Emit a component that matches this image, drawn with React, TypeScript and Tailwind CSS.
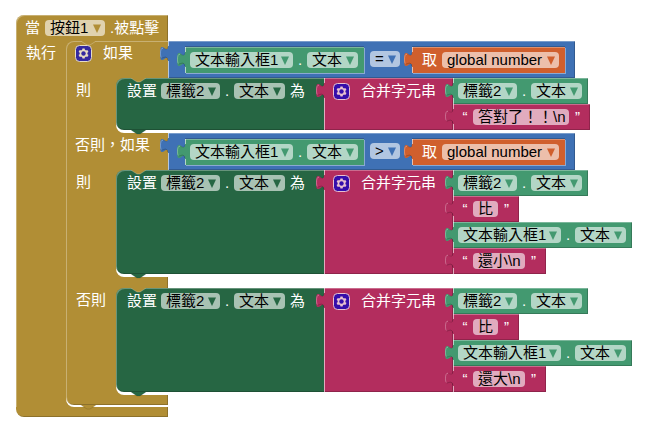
import type { ReactNode } from "react";

const EVENT = "#b18e35";
const EDGE =
  "shadow-[inset_0_1px_0_rgba(255,255,255,0.3),inset_1px_0_0_rgba(255,255,255,0.6),inset_-1px_-1px_0_rgba(0,0,0,0.2)]";
const INPUT_EDGE =
  "shadow-[inset_0_1px_0_rgba(255,255,255,0.3),inset_1px_0_0_rgba(255,255,255,0.6),1px_1px_0_rgba(255,255,255,0.4),0_-1px_0_rgba(0,0,0,0.2)]";

/** Puzzle tab sticking out of the left side of a value block. */
function Tab({ color }: { color: string }) {
  return (
    <svg
      className="absolute -left-2 top-[5px] h-[15px] w-[10px]"
      viewBox="-8 0 10 15"
      aria-hidden="true"
    >
      <path d="M2 0H0C0 10 -8 -8 -8 7.5S0 5 0 15H2Z" fill={color} />
      <path d="M-5 2.2C-6.8 2 -7.5 4 -7.5 7.5C-7.5 9.5 -7.2 10.8 -6.7 11.5" fill="none" stroke="#fff" strokeOpacity="0.3" />
      <path d="M-6.3 12C-4.5 12.2 -1 9 -0.3 14" fill="none" stroke="#000" strokeOpacity="0.2" />
      <path d="M-4.5 2.5C-2.5 3.2 -0.5 4 -0.3 1" fill="none" stroke="#000" strokeOpacity="0.12" />
    </svg>
  );
}

/** Connector wedge used both for the notch on top and the bump below. */
function Notch({ color, place }: { color: string; place: "top" | "bottom" }) {
  return (
    <svg
      className={`absolute left-[15px] z-10 h-[5px] w-[15px] ${place === "top" ? "top-0" : "top-full"}`}
      viewBox="0 0 15 5"
      aria-hidden="true"
    >
      <path d="M0 0L6 4H9L15 0Z" fill={color} />
      <path
        d="M0.5 0.5L6 4H9L14.5 0.5"
        fill="none"
        stroke={place === "top" ? "#fff" : "#000"}
        strokeOpacity={place === "top" ? 0.25 : 0.12}
      />
    </svg>
  );
}

function Gear() {
  return (
    <button type="button" aria-label="設定" className="block size-[17px] shrink-0">
      <svg viewBox="-0.5 -0.5 17 17" className="size-full" aria-hidden="true">
        <g opacity="0.7">
          <rect width="16" height="16" rx="4" fill="#00c" stroke="#fff" />
          <path
            fill="#fff"
            d="m4.203,7.296 0,1.368 -0.92,0.677 -0.11,0.41 0.9,1.559 0.41,0.11 1.043,-0.457 1.187,0.683 0.127,1.134 0.3,0.3 1.8,0 0.3,-0.299 0.127,-1.138 1.185,-0.682 1.046,0.458 0.409,-0.11 0.9,-1.559 -0.11,-0.41 -0.92,-0.677 0,-1.366 0.92,-0.677 0.11,-0.41 -0.9,-1.559 -0.409,-0.109 -1.046,0.458 -1.185,-0.682 -0.127,-1.138 -0.3,-0.299 -1.8,0 -0.3,0.3 -0.126,1.135 -1.187,0.682 -1.043,-0.457 -0.41,0.11 -0.899,1.559 0.108,0.409z"
          />
          <circle cx="8" cy="8" r="2.2" fill="#00c" />
        </g>
      </svg>
    </button>
  );
}

function Dropdown({ value, label, color, width }: { value: string; label: string; color: string; width: string }) {
  return (
    <span className={`relative block h-4 shrink-0 ${width}`}>
      <select
        aria-label={label}
        defaultValue={value}
        className="block h-4 w-full appearance-none rounded-sm bg-white/60 px-[5px] leading-4 text-black"
      >
        <option>{value}</option>
      </select>
      <svg
        className="pointer-events-none absolute right-1 top-1 h-[9px] w-2"
        viewBox="0 0 8 9"
        aria-hidden="true"
      >
        <path d="M0 0.500H8L4 9Z" fill={color} />
      </svg>
    </span>
  );
}

function Dot() {
  return <span className="w-[14px] shrink-0 text-center">.</span>;
}

function Getter({ component, width, inline = false }: { component: string; width: string; inline?: boolean }) {
  return (
    <div
      className={`relative flex h-[26px] w-fit items-center bg-[#439970] pl-[5px] pr-[6px] ${inline ? INPUT_EDGE : EDGE}`}
    >
      <Tab color="#439970" />
      <Dropdown value={component} label="元件" color="#439970" width={width} />
      <Dot />
      <Dropdown value="文本" label="屬性" color="#439970" width="w-[51px]" />
    </div>
  );
}

function TextValue({ value, width }: { value: string; width: string }) {
  return (
    <div className={`relative flex h-[26px] w-fit items-center bg-[#b32d5e] ${EDGE}`}>
      <Tab color="#b32d5e" />
      <span className="w-5 pl-1 text-center">“</span>
      <input
        aria-label="文字"
        defaultValue={value}
        className={`h-4 rounded-sm bg-white/60 pl-[5px] leading-4 text-black ${width}`}
      />
      <span className="w-[21px] pr-1 text-center">”</span>
    </div>
  );
}

function Compare({ operator }: { operator: string }) {
  return (
    <div className={`relative flex h-[37px] items-start bg-[#3f71b5] pl-[17px] pr-[10px] pt-[6px] ${EDGE}`}>
      <Tab color="#3f71b5" />
      <Getter component="文本輸入框1" width="w-[103px]" inline />
      <div className="flex h-[26px] items-start pl-[6px] pr-3 pt-1">
        <Dropdown value={operator} label="運算子" color="#3f71b5" width="w-[30px]" />
      </div>
      <div className={`relative flex h-[26px] items-center bg-[#d05f2d] pl-[10px] pr-[6px] ${INPUT_EDGE}`}>
        <Tab color="#d05f2d" />
        <span className="mr-[5px]">取</span>
        <Dropdown value="global number" label="變數" color="#d05f2d" width="w-[117px]" />
      </div>
    </div>
  );
}

function ConditionRow({ label, operator, gear = false }: { label: string; operator: string; gear?: boolean }) {
  return (
    <div className="flex">
      <div className="flex w-[102px] shrink-0 items-start bg-[#b18e35] pl-[9px]">
        <div className="flex h-6 items-center gap-[11px]">
          {gear && <Gear />}
          <span className="whitespace-nowrap">{label}</span>
        </div>
      </div>
      <Compare operator={operator} />
    </div>
  );
}

function SetText({ children }: { children: ReactNode }) {
  return (
    <div className="relative flex">
      <Notch color={EVENT} place="top" />
      <div className="w-[208px] shrink-0 rounded-l-lg bg-[#266643] shadow-[inset_1px_1px_0_rgba(255,255,255,0.3),inset_0_-1px_0_rgba(0,0,0,0.2)]">
        <div className="flex h-[26px] items-center pl-[11px]">
          <span className="mr-1">設置</span>
          <Dropdown value="標籤2" label="元件" color="#266643" width="w-[59px]" />
          <Dot />
          <Dropdown value="文本" label="屬性" color="#266643" width="w-[51px]" />
          <span className="ml-[5px]">為</span>
        </div>
      </div>
      <div className={`relative w-[129px] shrink-0 bg-[#b32d5e] ${EDGE}`}>
        <Tab color="#b32d5e" />
        <div className="flex h-[26px] items-center gap-[11px] pl-[9px]">
          <Gear />
          <span className="whitespace-nowrap">合并字元串</span>
        </div>
      </div>
      <div className="flex flex-col">{children}</div>
      <Notch color="#266643" place="bottom" />
    </div>
  );
}

function StatementRow({ label, children }: { label: string; children: ReactNode }) {
  return (
    <div className="flex">
      <div className="w-[50px] shrink-0 bg-[#b18e35] pl-[10px] leading-6">{label}</div>
      <div className="relative">
        <span className="absolute inset-y-0 left-0 w-2 bg-[#b18e35]" />
        <div className="relative rounded-bl-lg bg-white pb-[3px]">
          <span className="absolute left-0 top-0 size-2 bg-[#b18e35]" />
          <SetText>{children}</SetText>
        </div>
      </div>
    </div>
  );
}

function IfBlock() {
  return (
    <div className="relative rounded-tl-lg">
      <Notch color={EVENT} place="top" />
      <ConditionRow label="如果" operator="=" gear />
      <StatementRow label="則">
        <Getter component="標籤2" width="w-[59px]" />
        <TextValue value="答對了！！\n" width="w-[96px]" />
      </StatementRow>
      <ConditionRow label="否則，如果" operator=">" />
      <StatementRow label="則">
        <Getter component="標籤2" width="w-[59px]" />
        <TextValue value="比" width="w-[25px]" />
        <Getter component="文本輸入框1" width="w-[103px]" />
        <TextValue value="還小\n" width="w-[52px]" />
      </StatementRow>
      <div className="h-[11px] w-[102px] bg-[#b18e35] shadow-[inset_-1px_0_0_rgba(0,0,0,0.2)]" />
      <StatementRow label="否則">
        <Getter component="標籤2" width="w-[59px]" />
        <TextValue value="比" width="w-[25px]" />
        <Getter component="文本輸入框1" width="w-[103px]" />
        <TextValue value="還大\n" width="w-[52px]" />
      </StatementRow>
      <div className="h-[10px] w-[102px] rounded-bl-lg bg-[#b18e35] shadow-[inset_-1px_-1px_0_rgba(0,0,0,0.2)]" />
      <span className="pointer-events-none absolute inset-y-0 left-0 w-[102px] rounded-l-lg border-l border-t border-white/30" />
      <Notch color={EVENT} place="bottom" />
    </div>
  );
}

export default function App() {
  return (
    <main className="min-h-screen bg-white pl-4 pt-[15px] font-['Liberation_Sans','Noto_Sans_CJK_TC',sans-serif] text-[15px] leading-4 text-white">
      <section className="w-fit" aria-label="當 按鈕1 被點擊">
        <div className="flex h-[26px] w-[152px] items-center rounded-tl-lg bg-[#b18e35] pl-[9px] shadow-[inset_1px_1px_0_rgba(255,255,255,0.3),inset_-1px_0_0_rgba(0,0,0,0.2)]">
          <span className="mr-[5px]">當</span>
          <Dropdown value="按鈕1" label="元件" color={EVENT} width="w-[60px]" />
          <span className="ml-[5px] whitespace-nowrap">.被點擊</span>
        </div>
        <div className="flex">
          <div className="w-[50px] shrink-0 bg-[#b18e35] pl-[10px] leading-6 shadow-[inset_1px_0_0_rgba(255,255,255,0.3)]">
            執行
          </div>
          <div className="relative pb-[2px]">
            <span className="absolute bottom-0 left-0 h-[10px] w-2 bg-[#b18e35]" />
            <div className="absolute bottom-0 left-0 h-[10px] w-[102px] rounded-bl-lg bg-white" />
            <IfBlock />
          </div>
        </div>
        <div className="h-[10px] w-[152px] rounded-bl-lg bg-[#b18e35] shadow-[inset_-1px_-1px_0_rgba(0,0,0,0.2)]" />
      </section>
    </main>
  );
}
